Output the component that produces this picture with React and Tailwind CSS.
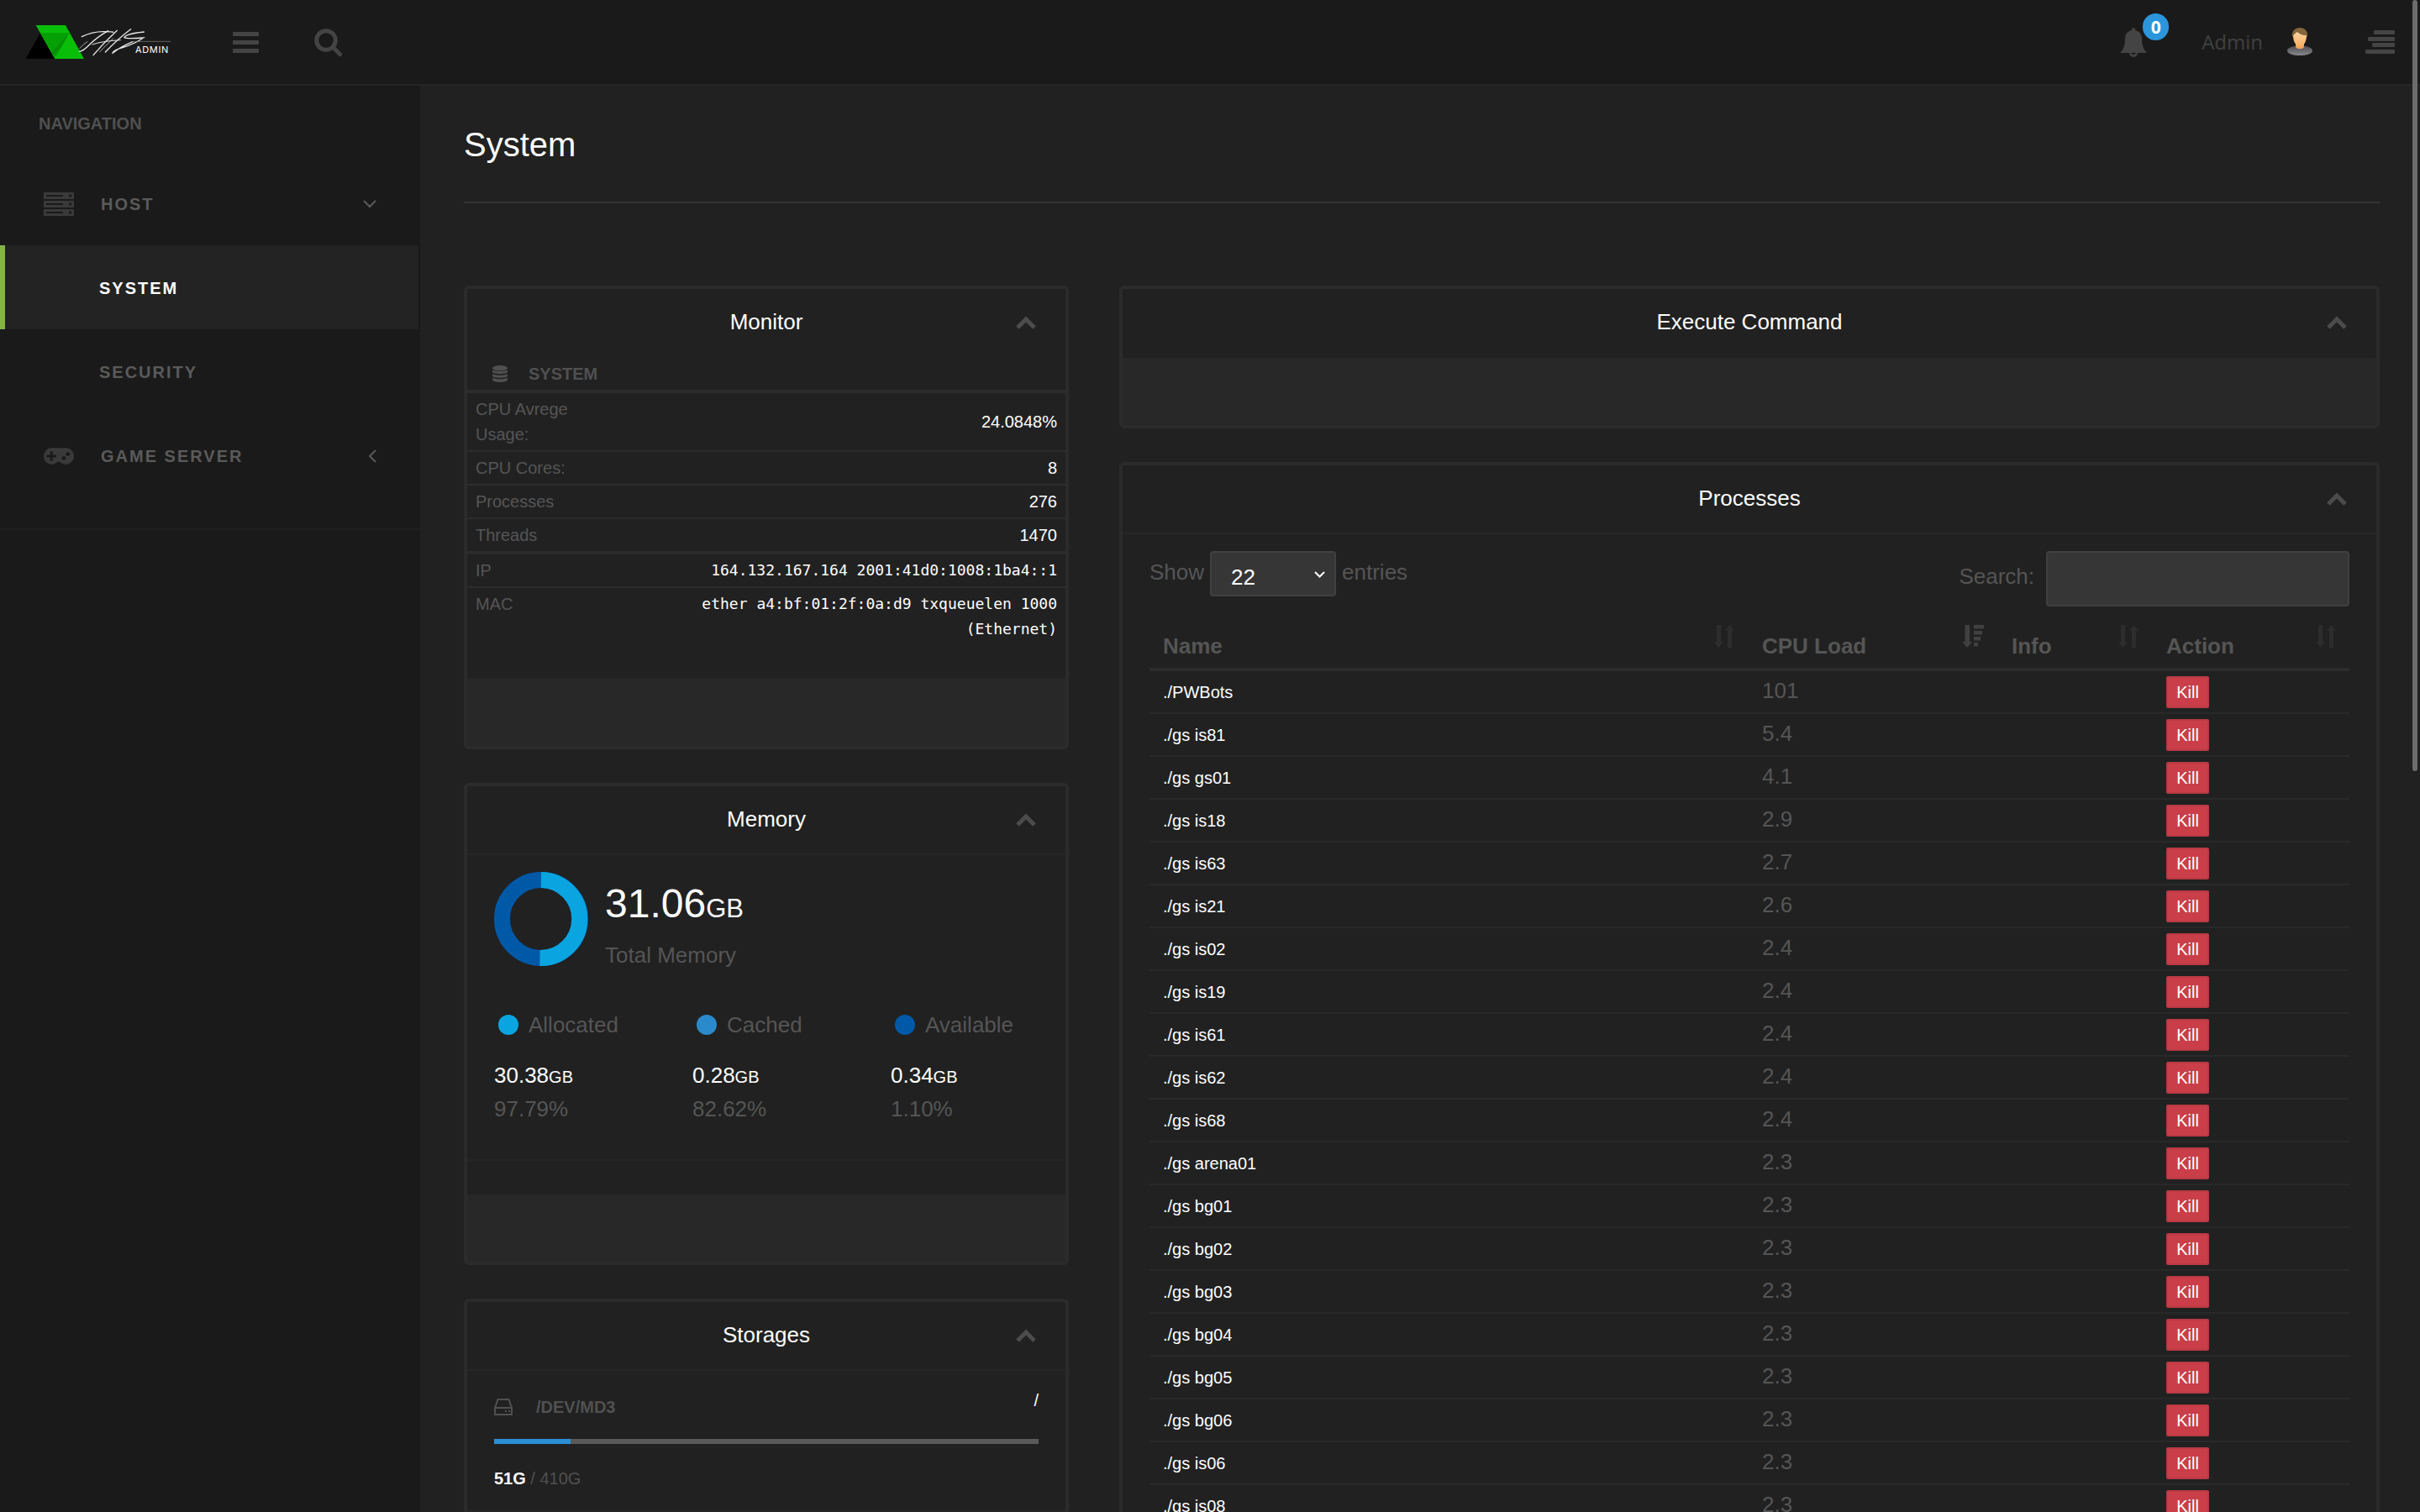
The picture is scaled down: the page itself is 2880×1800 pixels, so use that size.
import React, { useState } from 'react';

const systemRows = [
  { label: 'CPU Avrege Usage:', value: '24.0848%' },
  { label: 'CPU Cores:', value: '8' },
  { label: 'Processes', value: '276' },
  { label: 'Threads', value: '1470' }
];

const networkRows = [
  { label: 'IP', value: '164.132.167.164 2001:41d0:1008:1ba4::1' },
  { label: 'MAC', value: 'ether a4:bf:01:2f:0a:d9 txqueuelen 1000 (Ethernet)' }
];

const memory = [
  { label: 'Allocated', size: '30.38', percent: '97.79%', dot: 'bg-[#08a5e1]' },
  { label: 'Cached', size: '0.28', percent: '82.62%', dot: 'bg-[#2a8acb]' },
  { label: 'Available', size: '0.34', percent: '1.10%', dot: 'bg-[#0059a7]' }
];

const storages = [
  { device: '/DEV/MD3', mount: '/', used: '51G', total: '410G', percent: 14 }
];

const processes = [
  { name: './PWBots', cpu: '101' },
  { name: './gs is81', cpu: '5.4' },
  { name: './gs gs01', cpu: '4.1' },
  { name: './gs is18', cpu: '2.9' },
  { name: './gs is63', cpu: '2.7' },
  { name: './gs is21', cpu: '2.6' },
  { name: './gs is02', cpu: '2.4' },
  { name: './gs is19', cpu: '2.4' },
  { name: './gs is61', cpu: '2.4' },
  { name: './gs is62', cpu: '2.4' },
  { name: './gs is68', cpu: '2.4' },
  { name: './gs arena01', cpu: '2.3' },
  { name: './gs bg01', cpu: '2.3' },
  { name: './gs bg02', cpu: '2.3' },
  { name: './gs bg03', cpu: '2.3' },
  { name: './gs bg04', cpu: '2.3' },
  { name: './gs bg05', cpu: '2.3' },
  { name: './gs bg06', cpu: '2.3' },
  { name: './gs is06', cpu: '2.3' },
  { name: './gs is08', cpu: '2.3' }
];

function Logo() {
  return (
    <svg className="w-[174px] h-[42px]" viewBox="90 90 522 126" fill="none" strokeLinecap="round">
      <path d="M92 213L144 120L196 213Z" fill="#000" />
      <path d="M128 93H234L300 213H196Z" fill="#08be08" />
      <path d="M144 120H248L196 213Z" fill="#05a005" />
      <path d="M248 120L222 166L190 202L184 190Z" fill="#048f04" />
      <g stroke="#e8e8e8">
        <path d="M292 134Q330 116 368 116T404 118" strokeWidth="4" />
        <path d="M386 113Q346 136 320 162T284 186" strokeWidth="4" />
        <path d="M284 176Q298 160 312 152" strokeWidth="2" />
        <path d="M418 112Q370 156 333 200" strokeWidth="4" />
        <path d="M330 162Q362 150 430 146" strokeWidth="3" />
        <path d="M467 107Q420 142 376 189" strokeWidth="4" />
        <path d="M404 140L356 188" strokeWidth="2" />
        <path d="M514 117Q448 124 444 137Q450 142 512 138Q480 160 440 172T402 193Q430 170 474 152" strokeWidth="4" />
        <path d="M474 152L512 151H608" strokeWidth="2" stroke="#8a8a8a" />
      </g>
      <text x="483" y="192" fontSize="33" letterSpacing="2" fill="#fff" className="font-[Inter,sans-serif]">ADMIN</text>
    </svg>
  );
}

function BarsIcon() {
  return (
    <svg className="w-[31px] h-[25px]" viewBox="0 0 31 25" fill="currentColor">
      <rect width="31" height="5" rx="1" />
      <rect y="10" width="31" height="5" rx="1" />
      <rect y="20" width="31" height="5" rx="1" />
    </svg>
  );
}

function SearchIcon() {
  return (
    <svg className="w-[34px] h-[34px]" viewBox="0 0 34 34" fill="none" stroke="currentColor" strokeWidth="5">
      <circle cx="14" cy="14" r="11.3" />
      <path d="M22.5 22.5L30.5 30.5" strokeLinecap="round" />
    </svg>
  );
}

function BellIcon() {
  return (
    <svg className="w-8 h-[35px]" viewBox="0 0 32 35" fill="currentColor">
      <path d="M16 0c1.2 0 2 .8 2 2v1c5 .9 8 5 8 9.500c0 8.500 2 13.500 6 17.500H0c4-4 6-9 6-17.500C6 8 9 3.900 14 3V2c0-1.200.8-2 2-2z" />
      <path d="M11 30a5 5 0 0 0 10 0h-1.500l-2 1.500a3 3 0 0 1-4.500-1.500z" />
    </svg>
  );
}

function AlignRightIcon() {
  return (
    <svg className="w-[35px] h-7" viewBox="0 0 35 28" fill="currentColor">
      <rect x="10" width="25" height="5" rx="1" />
      <rect x="3" y="8" width="32" height="5" rx="1" />
      <rect x="8" y="15" width="27" height="5" rx="1" />
      <rect y="23" width="35" height="5" rx="1" />
    </svg>
  );
}

function Avatar() {
  return (
    <svg className="w-8 h-[34px]" viewBox="0 0 32 34">
      <defs>
        <linearGradient id="face" x1="0" y1="0" x2="0" y2="1">
          <stop offset="0" stopColor="#ffd9ae" />
          <stop offset="1" stopColor="#f7b063" />
        </linearGradient>
        <linearGradient id="shirt" x1="0" y1="0" x2="0" y2="1">
          <stop offset="0" stopColor="#505054" />
          <stop offset="1" stopColor="#88888c" />
        </linearGradient>
      </defs>
      <path d="M1 27c0-3 6-5 10-5h10c4 0 10 2 10 5c0 4-7 6-15 6S1 31 1 27z" fill="url(#shirt)" />
      <path d="M11 17h10v6c-2 3-8 3-10 0z" fill="#f0a55c" />
      <path d="M8 9c0-5 3-7 8-7s8 2 8 7c0 7-3 13-8 13S8 16 8 9z" fill="url(#face)" />
      <path d="M7 11C6 4 10 0 16 0s10 4 9 11l-2-2c-5 0-8-2-10-4c-2 1-4 3-6 6z" fill="#84663a" />
    </svg>
  );
}

function ServerIcon() {
  return (
    <svg className="w-9 h-7" viewBox="0 0 36 28" fill="none" stroke="currentColor" strokeWidth="2">
      {[0, 10, 20].map(y => (
        <g key={y}>
          <rect x="1" y={y + 1} width="34" height="6" fill="currentColor" />
          <path d={`M3 ${y + 4}H23`} stroke="#1a1a1a" />
          <path d={`M30 ${y + 4}H33`} stroke="#1a1a1a" strokeWidth="3" />
        </g>
      ))}
    </svg>
  );
}

function GamepadIcon() {
  return (
    <svg className="w-9 h-5" viewBox="0 0 37 20">
      <path d="M10 0h17a10 10 0 0 1 0 20c-3 0-5-1-7-3h-3c-2 2-4 3-7 3a10 10 0 0 1 0-20z" fill="currentColor" />
      <path d="M9.500 4v12M3.500 10h12" stroke="#1a1a1a" strokeWidth="3" />
      <circle cx="24.500" cy="12.500" r="2.500" fill="#1a1a1a" />
      <circle cx="29.500" cy="7.500" r="2.500" fill="#1a1a1a" />
    </svg>
  );
}

function DatabaseIcon() {
  return (
    <svg className="w-[18px] h-5" viewBox="0 0 18 20" fill="currentColor">
      <ellipse cx="9" cy="3.200" rx="9" ry="3.200" />
      <path d="M0 5.200c2 2.400 16 2.400 18 0v2.600c0 3-18 3-18 0z" />
      <path d="M0 10c2 2.400 16 2.400 18 0v2.400c0 3-18 3-18 0z" />
      <path d="M0 14.600c2 2.400 16 2.400 18 0V17c0 4-18 4-18 0z" />
    </svg>
  );
}

function DriveIcon() {
  return (
    <svg className="w-[22px] h-5" viewBox="0 0 22 20" fill="none" stroke="currentColor" strokeWidth="2">
      <path d="M1 11L4.500 1h13L21 11v8H1zM1 11h20" />
      <path d="M13 15h2M17 15h2" />
    </svg>
  );
}

function SortIcon() {
  return (
    <svg className="w-6 h-[27px] absolute right-4 top-2 text-[#2d2d2d]" viewBox="0 0 24 27" fill="currentColor">
      <path d="M3 0h5v20h3l-5.500 7L0 20h3z" />
      <path d="M16 27h5V7h3l-5.500-7L13 7h3z" />
    </svg>
  );
}

function SortDescIcon() {
  return (
    <svg className="w-[26px] h-[27px] absolute right-4 top-2 text-[#404040]" viewBox="0 0 26 27" fill="currentColor">
      <path d="M3.500 0h5.500v20h3l-6 7L0 20h3.500z" />
      <rect x="14" y="0" width="12" height="4.500" />
      <rect x="14" y="7" width="10" height="4.500" />
      <rect x="14" y="14" width="8" height="4.500" />
      <rect x="14" y="21" width="5" height="4.500" />
    </svg>
  );
}

function Card({ title, line = true, footer, children }) {
  const [open, setOpen] = useState(true);

  return (
    <section className="border-4 border-[#2b2b2b] rounded-md">
      <header className={`h-[82px] px-8 pb-[2px] grid grid-cols-[1fr_auto_1fr] items-center border-b-2 ${line ? 'border-[#262626]' : 'border-transparent'}`}>
        <h2 className="col-start-2 text-[26px] leading-8 text-white">{title}</h2>
        <button
          type="button"
          aria-label="Collapse"
          onClick={() => setOpen(!open)}
          className="justify-self-end mr-[3px] pt-[2px] text-[#4c4c4c]"
        >
          <svg className="w-6 h-4" viewBox="0 0 24 16" fill="none" stroke="currentColor" strokeWidth="5">
            <path d="M2 14L12 4L22 14" />
          </svg>
        </button>
      </header>
      {open && children}
      {footer && <footer className="h-20 bg-[#282828]"></footer>}
    </section>
  );
}

function Header() {
  return (
    <header className="h-[102px] shrink-0 flex items-center pl-[30px] pr-[30px] border-b-2 border-[#252525] bg-[#1a1a1a] text-[#444444]">
      <a href="#home" aria-label="Home"><Logo /></a>
      <button type="button" aria-label="Menu" className="ml-[73px]"><BarsIcon /></button>
      <button type="button" aria-label="Search" className="ml-[66px] pt-[2px]"><SearchIcon /></button>
      <button type="button" aria-label="Notifications" className="relative ml-auto">
        <BellIcon />
        <span className="absolute -top-[17px] left-[27px] w-[31px] h-8 rounded-full bg-[#2b96db] text-white text-[21px] leading-8 font-bold text-center font-[Open_Sans,sans-serif]">0</span>
      </button>
      <a href="#profile" className="ml-[65px] flex items-center gap-7 text-2xl text-[#404040] font-[Open_Sans,sans-serif]">
        Admin
        <Avatar />
      </a>
      <button type="button" aria-label="Sidebar" className="ml-[62px]"><AlignRightIcon /></button>
    </header>
  );
}

function Sidebar() {
  return (
    <aside className="w-[500px] shrink-0 bg-[#1a1a1a] text-xl font-bold text-[#5a5a5a]">
      <div className="h-[90px] pl-[46px] flex items-center text-[#505050]">NAVIGATION</div>
      <nav className="pb-[37px] border-b-2 border-[#1f1f1f] tracking-[2px]">
        <a href="#host" className="h-[100px] pl-[52px] pr-[52px] pt-[2px] flex items-center">
          <span className="w-[68px] text-[#3a3a3a]"><ServerIcon /></span>
          HOST
          <svg className="ml-auto w-4 h-[10px]" viewBox="0 0 16 10" fill="none" stroke="currentColor" strokeWidth="2">
            <path d="M1 1L8 8L15 1" />
          </svg>
        </a>
        <a href="#system" className="h-[100px] mr-[2px] pl-28 pt-[2px] flex items-center border-l-[6px] border-[#84b44a] bg-[#232323] text-white">SYSTEM</a>
        <a href="#security" className="h-[100px] pl-[118px] pt-[2px] flex items-center">SECURITY</a>
        <a href="#game" className="h-[100px] pl-[52px] pr-[52px] pt-[2px] flex items-center">
          <span className="w-[68px] text-[#3a3a3a]"><GamepadIcon /></span>
          GAME SERVER
          <svg className="ml-auto w-[10px] h-4" viewBox="0 0 10 16" fill="none" stroke="currentColor" strokeWidth="2">
            <path d="M9 1L2 8L9 15" />
          </svg>
        </a>
      </nav>
    </aside>
  );
}

function MonitorCard() {
  return (
    <Card title="Monitor" line={false} footer>
      <table className="w-full table-fixed mb-10 text-xl leading-[30px]">
        <colgroup>
          <col className="w-1/4" />
          <col className="w-3/4" />
        </colgroup>
        <thead>
          <tr className="text-left text-[#505050]">
            <th colSpan="2" className="h-10 pl-[30px]">
              <span className="flex items-center gap-[25px]">
                <DatabaseIcon />
                SYSTEM
              </span>
            </th>
          </tr>
        </thead>
        <tbody>
          {systemRows.map((row, i) => (
            <tr key={row.label} className={i === 0 ? 'border-t-4 border-[#2c2c2c]' : 'border-t-2 border-[#2c2c2c]'}>
              <td className="px-[10px] py-1 text-[#555555]">{row.label}</td>
              <td className="px-[10px] py-1 text-right text-white">{row.value}</td>
            </tr>
          ))}
          {networkRows.map((row, i) => (
            <tr key={row.label} className={i === 0 ? 'border-t-4 border-[#2c2c2c]' : 'border-t-2 border-[#2c2c2c]'}>
              <td className="px-[10px] py-1 align-top text-[#555555]">{row.label}</td>
              <td className="px-[10px] py-1 text-right text-lg leading-[30px] text-white font-[DejaVu_Sans_Mono,monospace]">{row.value}</td>
            </tr>
          ))}
        </tbody>
      </table>
    </Card>
  );
}

function MemoryCard() {
  return (
    <Card title="Memory" footer>
      <div className="h-[364px] mb-10 px-8 pt-5 border-b-2 border-[#262626] text-[26px] text-[#555555]">
        <div className="flex gap-5">
          <svg className="w-28 h-28" viewBox="0 0 112 112" fill="none" strokeWidth="19">
            <circle cx="56" cy="56" r="46.500" stroke="#0059a7" />
            <path d="M56 9.500A46.500 46.500 0 1 1 54.500 102.500" stroke="#0aa5e1" />
          </svg>
          <div className="pt-2">
            <div className="text-5xl leading-[60px] text-white">31.06<span className="text-[31px]">GB</span></div>
            <div className="leading-[50px]">Total Memory</div>
          </div>
        </div>
        <div className="mt-[38px] grid grid-cols-3 gap-[60px]">
          {memory.map(item => (
            <div key={item.label} className="leading-10">
              <div className="flex items-center gap-3 pl-[5px] whitespace-nowrap">
                <span className={`w-6 h-6 shrink-0 rounded-full ${item.dot}`}></span>
                {item.label}
              </div>
              <div className="mt-5 text-white">{item.size}<span className="text-xl">GB</span></div>
              <div>{item.percent}</div>
            </div>
          ))}
        </div>
      </div>
    </Card>
  );
}

function StoragesCard() {
  return (
    <Card title="Storages" footer>
      {storages.map(disk => (
        <div key={disk.device} className="h-[168px] mb-10 px-8 pt-5 border-b-2 border-[#262626] text-xl leading-[30px] text-[#505050]">
          <div className="flex items-start justify-between">
            <h3 className="mt-2 flex items-center gap-7 font-bold">
              <DriveIcon />
              {disk.device}
            </h3>
            <span className="text-white">{disk.mount}</span>
          </div>
          <div className="mt-[23px] h-[6px] bg-[#5a5a5a]">
            <div className="h-full bg-[#2c8fd6]" style={{ width: `${disk.percent}%` }}></div>
          </div>
          <div className="mt-[26px]"><b className="text-white">{disk.used}</b> / {disk.total}</div>
        </div>
      ))}
    </Card>
  );
}

function ProcessesCard() {
  const [entries, setEntries] = useState('22');
  const [search, setSearch] = useState('');
  const rows = processes.filter(p => p.name.includes(search)).slice(0, Number(entries));

  return (
    <Card title="Processes" footer>
      <div className="px-8 pt-5 pb-10 text-[26px] text-[#555555]">
        <div className="flex items-start justify-between">
          <label className="flex items-start gap-[7px] leading-[50px]">
            Show
            <span className="relative">
              <select
                value={entries}
                onChange={(e) => setEntries(e.target.value)}
                className="block appearance-none w-[150px] h-[54px] pl-[23px] pt-1 border-2 border-[#404040] rounded bg-[#363636] text-white"
              >
                <option value="10">10</option>
                <option value="22">22</option>
                <option value="50">50</option>
              </select>
              <svg className="absolute right-[13px] top-6 w-[13px] h-2 text-white" viewBox="0 0 13 8" fill="none" stroke="currentColor" strokeWidth="2">
                <path d="M1 1L6.500 6.500L12 1" />
              </svg>
            </span>
            entries
          </label>
          <label className="flex items-start gap-[14px] leading-[60px]">
            Search:
            <input
              type="search"
              value={search}
              onChange={(e) => setSearch(e.target.value)}
              className="w-[361px] h-[66px] px-6 border-2 border-[#404040] rounded bg-[#363636] text-white"
            />
          </label>
        </div>
        <table className="mt-[14px] w-full table-fixed border-separate border-spacing-0">
          <thead>
            <tr className="text-left leading-10">
              <th className="relative h-[63px] pl-4 pb-[6px] align-bottom border-b-4 border-[#2c2c2c]">Name<SortIcon /></th>
              <th className="relative w-[297px] pl-[17px] pb-[6px] align-bottom border-b-4 border-[#2c2c2c]">CPU Load<SortDescIcon /></th>
              <th className="relative w-[184px] pl-[17px] pb-[6px] align-bottom border-b-4 border-[#2c2c2c]">Info<SortIcon /></th>
              <th className="relative w-[235px] pl-[17px] pb-[6px] align-bottom border-b-4 border-[#2c2c2c]">Action<SortIcon /></th>
            </tr>
          </thead>
          <tbody>
            {rows.map(p => (
              <tr key={p.name} className="leading-8">
                <td className="h-[51px] pl-4 text-xl text-white border-b-2 border-[#292929]">{p.name}</td>
                <td className="pl-[17px] pb-1 border-b-2 border-[#292929]">{p.cpu}</td>
                <td className="border-b-2 border-[#292929]"></td>
                <td className="pl-[17px] border-b-2 border-[#292929]">
                  <button type="button" className="block h-[38px] w-[51px] rounded-xs border-2 border-[#b93a44] bg-[#ca3e49] text-xl text-white">
                    Kill
                  </button>
                </td>
              </tr>
            ))}
          </tbody>
        </table>
      </div>
    </Card>
  );
}

function App() {
  return (
    <div className="relative h-screen overflow-hidden flex flex-col bg-[#212121] font-[Liberation_Sans,Arial,sans-serif]">
      <Header />
      <div className="flex-1 flex min-h-0">
        <Sidebar />
        <main className="flex-1 min-w-0 pl-[52px] pr-12 pt-10">
          <h1 className="pb-[38px] mb-[98px] border-b-2 border-[#353535] text-[40px] leading-[60px] text-white">System</h1>
          <div className="grid grid-cols-12 gap-[60px] items-start">
            <div className="col-span-4 flex flex-col gap-10">
              <MonitorCard />
              <MemoryCard />
              <StoragesCard />
            </div>
            <div className="col-span-8 flex flex-col gap-10">
              <Card title="Execute Command" line={false} footer />
              <ProcessesCard />
            </div>
          </div>
        </main>
      </div>
      {/* scrollbar thumb */}
      <div className="absolute top-0 right-[3px] w-[6px] h-[51%] rounded-full bg-[#6c6c6c]"></div>
    </div>
  );
}

export default App;
